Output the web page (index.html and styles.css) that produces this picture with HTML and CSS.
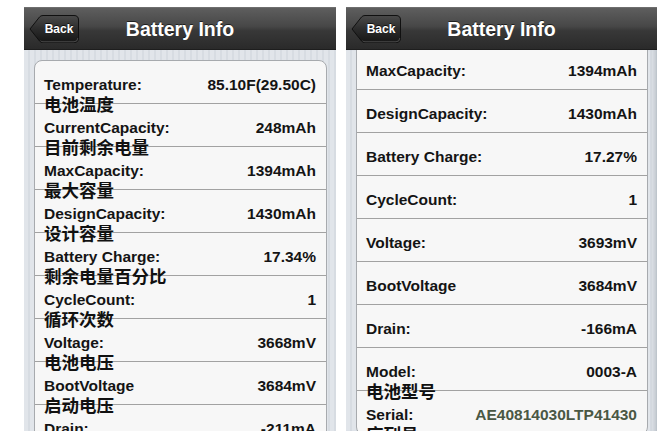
FILE: index.html
```html
<!DOCTYPE html>
<html lang="zh">
<head>
<meta charset="utf-8">
<title>Battery Info</title>
<link rel="stylesheet" href="styles.css">
</head>
<body>
<div class="screens">
  <section class="phone">
    <header class="navbar">
      <div class="back">
        <svg class="back-shape" width="50" height="28" viewBox="0 0 50 28">
          <defs>
            <linearGradient id="bg1" x1="0" y1="0" x2="0" y2="1">
              <stop offset="0" stop-color="#4a4a4a"/>
              <stop offset="0.5" stop-color="#2c2c2c"/>
              <stop offset="1" stop-color="#161616"/>
            </linearGradient>
          </defs>
          <path d="M1 14 L10.5 2 Q11.8 0.5 14 0.5 H45 Q49.5 0.5 49.5 5 V23 Q49.5 27.5 45 27.5 H14 Q11.8 27.5 10.5 26 Z" fill="url(#bg1)" stroke="#101010" stroke-width="1"/>
          <path d="M11.5 25.8 Q12.6 26.8 14 26.8 H45 Q48.8 26.8 48.8 23" fill="none" stroke="#5a5a5a" stroke-width="0.8"/>
        </svg>
        <span class="back-text">Back</span>
      </div>
      <h1 class="title">Battery Info</h1>
      <div class="spacer"></div>
    </header>
    <div class="content">
      <div class="group">
        <div class="row"><div class="label"><span class="en">Temperature:</span><span class="zh">电池温度</span></div><div class="value">85.10F(29.50C)</div></div>
        <div class="row"><div class="label"><span class="en">CurrentCapacity:</span><span class="zh">目前剩余电量</span></div><div class="value">248mAh</div></div>
        <div class="row"><div class="label"><span class="en">MaxCapacity:</span><span class="zh">最大容量</span></div><div class="value">1394mAh</div></div>
        <div class="row"><div class="label"><span class="en">DesignCapacity:</span><span class="zh">设计容量</span></div><div class="value">1430mAh</div></div>
        <div class="row"><div class="label"><span class="en">Battery Charge:</span><span class="zh">剩余电量百分比</span></div><div class="value">17.34%</div></div>
        <div class="row"><div class="label"><span class="en">CycleCount:</span><span class="zh">循环次数</span></div><div class="value">1</div></div>
        <div class="row"><div class="label"><span class="en">Voltage:</span><span class="zh">电池电压</span></div><div class="value">3668mV</div></div>
        <div class="row"><div class="label"><span class="en">BootVoltage</span><span class="zh">启动电压</span></div><div class="value">3684mV</div></div>
        <div class="row"><div class="label"><span class="en">Drain:</span></div><div class="value">-211mA</div></div>
      </div>
    </div>
  </section>

  <section class="phone">
    <header class="navbar">
      <div class="back">
        <svg class="back-shape" width="50" height="28" viewBox="0 0 50 28">
          <defs>
            <linearGradient id="bg2" x1="0" y1="0" x2="0" y2="1">
              <stop offset="0" stop-color="#4a4a4a"/>
              <stop offset="0.5" stop-color="#2c2c2c"/>
              <stop offset="1" stop-color="#161616"/>
            </linearGradient>
          </defs>
          <path d="M1 14 L10.5 2 Q11.8 0.5 14 0.5 H45 Q49.5 0.5 49.5 5 V23 Q49.5 27.5 45 27.5 H14 Q11.8 27.5 10.5 26 Z" fill="url(#bg2)" stroke="#101010" stroke-width="1"/>
          <path d="M11.5 25.8 Q12.6 26.8 14 26.8 H45 Q48.8 26.8 48.8 23" fill="none" stroke="#5a5a5a" stroke-width="0.8"/>
        </svg>
        <span class="back-text">Back</span>
      </div>
      <h1 class="title">Battery Info</h1>
      <div class="spacer"></div>
    </header>
    <div class="content">
      <div class="group group-scrolled">
        <div class="row"><div class="label"><span class="en">MaxCapacity:</span></div><div class="value">1394mAh</div></div>
        <div class="row"><div class="label"><span class="en">DesignCapacity:</span></div><div class="value">1430mAh</div></div>
        <div class="row"><div class="label"><span class="en">Battery Charge:</span></div><div class="value">17.27%</div></div>
        <div class="row"><div class="label"><span class="en">CycleCount:</span></div><div class="value">1</div></div>
        <div class="row"><div class="label"><span class="en">Voltage:</span></div><div class="value">3693mV</div></div>
        <div class="row"><div class="label"><span class="en">BootVoltage</span></div><div class="value">3684mV</div></div>
        <div class="row"><div class="label"><span class="en">Drain:</span></div><div class="value">-166mA</div></div>
        <div class="row"><div class="label"><span class="en">Model:</span><span class="zh">电池型号</span></div><div class="value">0003-A</div></div>
        <div class="row"><div class="label"><span class="en">Serial:</span><span class="zh">序列号</span></div><div class="value serial">AE40814030LTP41430</div></div>
      </div>
    </div>
  </section>
</div>
</body>
</html>
```

FILE: styles.css
```css
html, body {
  margin: 0;
  padding: 0;
  height: 100%;
  overflow: hidden;
  background: #ffffff;
}

body {
  font-family: "Liberation Sans", Arial, "Noto Sans CJK SC", sans-serif;
}

.screens {
  display: flex;
  gap: 10px;
  padding: 7px 0 0 24px;
  height: 100%;
  box-sizing: border-box;
}

.phone {
  display: flex;
  flex-direction: column;
  width: 312px;
  height: 100%;
}

.phone + .phone {
  width: 311px;
}

.navbar {
  display: grid;
  grid-template-columns: 1fr auto 1fr;
  align-items: center;
  height: 43px;
  box-sizing: border-box;
  padding: 0 5px;
  background: linear-gradient(#5e5e5e 0%, #474747 45%, #383838 55%, #2a2a2a 100%);
  border-top: 1px solid #6e6e6e;
  border-bottom: 1px solid #1e1e1e;
  flex: none;
}

.back {
  display: grid;
  width: 50px;
  height: 28px;
  justify-self: start;
}

.back-shape,
.back-text {
  grid-area: 1 / 1;
}

.back-text {
  align-self: center;
  padding-left: 11px;
  padding-right: 1px;
  text-align: center;
  color: #ffffff;
  font-weight: bold;
  font-size: 12px;
  line-height: 14px;
  text-shadow: 0 -1px 0 rgba(0, 0, 0, 0.7);
}

.title {
  margin: 0;
  color: #ffffff;
  font-size: 19.5px;
  font-weight: bold;
  line-height: 24px;
  text-shadow: 0 -1px 0 rgba(0, 0, 0, 0.6);
  white-space: nowrap;
}

.content {
  flex: 1;
  overflow: hidden;
  padding: 10px 9px 0 10px;
  background: repeating-linear-gradient(90deg, #e1e5ea 0px, #e1e5ea 4px, #d7dce2 4px, #d7dce2 6px);
}

.phone + .phone .content {
  padding-top: 0;
  box-shadow: inset -6px 0 4px -3px rgba(150, 160, 170, 0.45);
}

.group {
  background: #f7f7f7;
  border: 1px solid #a7aaae;
  border-radius: 8px;
}

.group-scrolled {
  margin-top: -4px;
  border-radius: 0 0 8px 8px;
}

.row {
  display: flex;
  justify-content: space-between;
  align-items: flex-start;
  height: 43px;
  box-sizing: border-box;
  padding: 14px 10px 0 9px;
  border-bottom: 1px solid #a2a2a2;
  color: #141414;
  font-weight: bold;
  font-size: 15.5px;
  line-height: 19px;
}

.label {
  display: flex;
  flex-direction: column;
}

.en {
  white-space: nowrap;
}

.zh {
  font-family: "Noto Sans CJK SC", sans-serif;
  font-size: 17.5px;
  font-weight: bold;
  line-height: 19px;
  white-space: nowrap;
  color: #111111;
}

.value {
  white-space: nowrap;
  text-align: right;
}

.serial {
  color: #4a5844;
}
```
